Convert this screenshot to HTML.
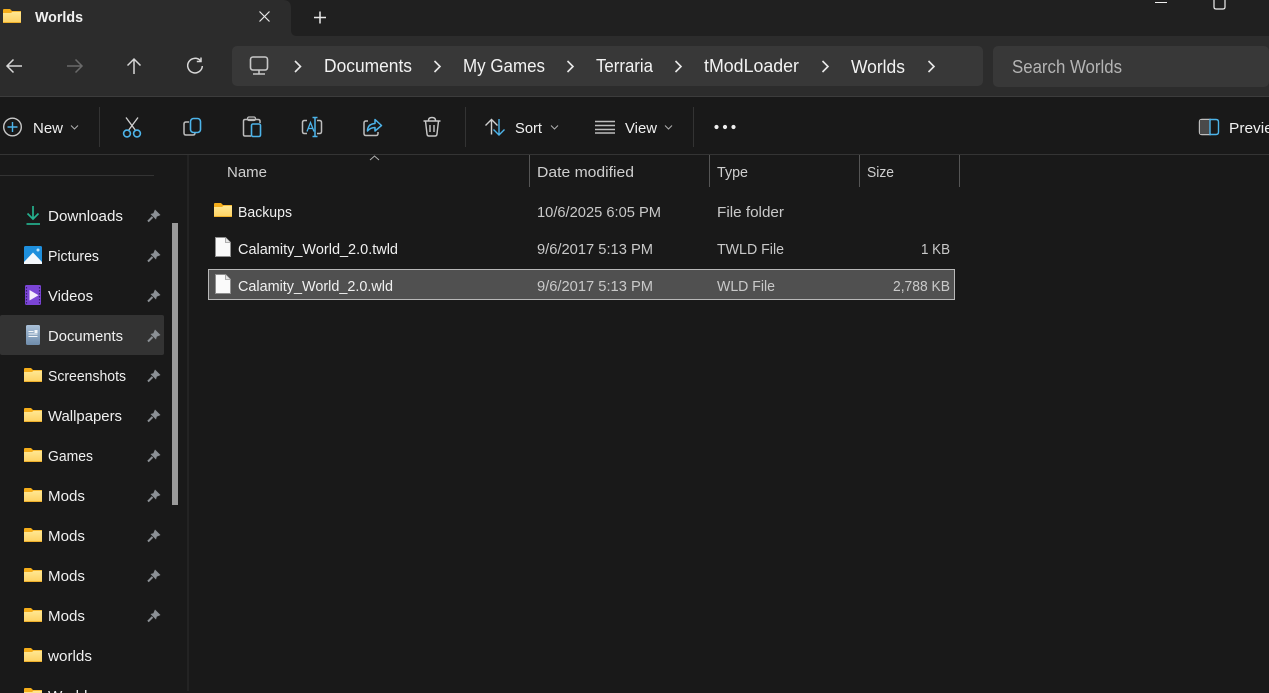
<!DOCTYPE html>
<html><head><meta charset="utf-8"><style>
html,body{margin:0;padding:0;background:#191919;overflow:hidden;width:1269px;height:693px}
svg{display:block;position:absolute;left:0;top:0}
text{font-family:"Liberation Sans",sans-serif;fill:#f0f0f0}
.b{font-size:18px;fill:#f2f2f2}
.t{font-size:14.5px;fill:#f0f0f0}
.h{font-size:14.5px;fill:#cfcfcf}
.r{font-size:14.5px;fill:#c9c9c9}
</style></head><body>
<svg width="1269" height="693" viewBox="0 0 1269 693" fill="none">
<defs>
<linearGradient id="fg" x1="0" y1="0" x2="0" y2="1"><stop offset="0" stop-color="#ffe793"/><stop offset="1" stop-color="#fdd262"/></linearGradient>
<linearGradient id="dg" x1="0" y1="0" x2="0" y2="1"><stop offset="0" stop-color="#a9c0d8"/><stop offset="1" stop-color="#6f8cab"/></linearGradient>
<g id="folder"><path d="M0 1Q0 0 1 0H7L9 2H18V5H0Z" fill="#f4ad1a"/><path d="M0 14V4H8L9.500 2.800H17.500Q18 2.800 18 3.500V14Z" fill="url(#fg)"/><path d="M0 13.500H18" stroke="#efb02c" stroke-width="1"/></g>
<g id="pin"><path d="M8 .5L13.500 6 12 6.800 9.800 7.600 9 10.500 3.500 5 6.400 4.200 7.300 2Z" fill="#8b9095"/><path d="M5.500 8L1 12.500" stroke="#8b9095" stroke-width="2"/></g>
<g id="file"><path d="M.5.5H10.500L15.500 5.500V19.500H.5Z" fill="#fafafa" stroke="#8f8f8f"/><path d="M10.500.5V5.500H15.500" fill="#e6e6e6" stroke="#9a9a9a" stroke-width=".8"/></g>
</defs>

<rect width="1269" height="36" fill="#202020"/>
<path d="M0 0H283Q291 0 291 8V30Q291 36 297 36H1269V96H0Z" fill="#2c2c2c"/>
<rect x="0" y="96" width="1269" height="1" fill="#3c3c3c"/>
<rect x="0" y="97" width="1269" height="57" fill="#191919"/>
<rect x="0" y="154" width="1269" height="1" fill="#343434"/>

<use href="#folder" transform="translate(3 9)"/>
<text x="35" y="22" font-size="14.5" font-weight="bold" textLength="48" lengthAdjust="spacingAndGlyphs">Worlds</text>
<path d="M259.500 11.500L269.500 21.500M269.500 11.500L259.500 21.500" stroke="#e8e8e8" stroke-width="1.200"/>
<path d="M320 11.500V23.500M314 17.500H326" stroke="#e8e8e8" stroke-width="1.500"/>
<path d="M1155 2.500H1167" stroke="#f0f0f0" stroke-width="1"/>
<path d="M1214 -2V7Q1214 9 1216 9H1223Q1225 9 1225 7V-2" stroke="#f0f0f0" stroke-width="1.200"/>

<path d="M22 66H7.500M13.500 59.500L7 66L13.500 72.500" stroke="#d8d8d8" stroke-width="1.500"/>
<path d="M67 66H81.500M75.500 59.500L82 66L75.500 72.500" stroke="#6a6a6a" stroke-width="1.500"/>
<path d="M134 74V59.500M127.500 65.500L134 59L140.500 65.500" stroke="#d8d8d8" stroke-width="1.500"/>
<path d="M200.500 60.800A7.300 7.300 0 1 0 202.300 66" stroke="#d8d8d8" stroke-width="1.500"/><path d="M201 57.500V61.500H196.800" stroke="#d8d8d8" stroke-width="1.500"/>

<rect x="232" y="46" width="751" height="40" rx="5" fill="#383838"/>
<rect x="993" y="46" width="276" height="41" rx="5" fill="#383838"/>
<rect x="250.500" y="57" width="17" height="13" rx="2.500" stroke="#c8c8c8" stroke-width="1.600"/>
<path d="M259 70V73.500M253 74H265" stroke="#c8c8c8" stroke-width="1.500"/>
<g stroke="#e8e8e8" stroke-width="1.600">
<path d="M295 61L300.500 66.500L295 72"/>
<path d="M434.500 61L440 66.500L434.500 72"/>
<path d="M567.500 61L573 66.500L567.500 72"/>
<path d="M675.500 61L681 66.500L675.500 72"/>
<path d="M822.500 61L828 66.500L822.500 72"/>
<path d="M928.500 61L934 66.500L928.500 72"/>
</g>
<text class="b" x="324" y="72" textLength="88" lengthAdjust="spacingAndGlyphs">Documents</text>
<text class="b" x="463" y="72" textLength="82" lengthAdjust="spacingAndGlyphs">My Games</text>
<text class="b" x="596" y="72" textLength="57" lengthAdjust="spacingAndGlyphs">Terraria</text>
<text class="b" x="704" y="72" textLength="95" lengthAdjust="spacingAndGlyphs">tModLoader</text>
<text class="b" x="851" y="73" textLength="54" lengthAdjust="spacingAndGlyphs">Worlds</text>
<text x="1012" y="73" font-size="18" style="fill:#b4b4b4" textLength="110" lengthAdjust="spacingAndGlyphs">Search Worlds</text>

<circle cx="12.500" cy="127" r="8.800" stroke="#c8c8c8" stroke-width="1.400"/>
<path d="M12.500 122V132M7.500 127H17.500" stroke="#4db4ea" stroke-width="1.400"/>
<text class="t" x="33" y="133" textLength="30" lengthAdjust="spacingAndGlyphs">New</text>
<path d="M71 125.500L74.500 129L78 125.500" stroke="#b0b0b0"/>
<rect x="99" y="107" width="1" height="40" fill="#333"/>

<path d="M126 117.500L136 131M138 117.500L128 131" stroke="#d0d0d0" stroke-width="1.300"/>
<circle cx="127" cy="133.500" r="3.400" stroke="#4db4ea" stroke-width="1.600"/><circle cx="137" cy="133.500" r="3.400" stroke="#4db4ea" stroke-width="1.600"/>
<path d="M189 122H186Q184 122 184 124V133Q184 135 186 135H193Q195 135 195 133" stroke="#bdbdbd" stroke-width="1.500"/>
<rect x="190.500" y="118.500" width="10" height="14" rx="3" stroke="#4db4ea" stroke-width="1.600"/>
<path d="M251 136H245Q243.500 136 243.500 134.500V121Q243.500 119.500 245 119.500H258Q260 119.500 260 121V123" stroke="#bdbdbd" stroke-width="1.500"/>
<rect x="247.500" y="117" width="8" height="3.500" rx="1.500" stroke="#bdbdbd" stroke-width="1.300"/>
<rect x="251.500" y="124" width="9" height="12.500" rx="1.500" stroke="#4db4ea" stroke-width="1.600"/>
<path d="M307 120.500H304.500Q302.500 120.500 302.500 122.500V131.500Q302.500 133.500 304.500 133.500H307M317 120.500H319.500Q321.500 120.500 321.500 122.500V131.500Q321.500 133.500 319.500 133.500H317" stroke="#bdbdbd" stroke-width="1.500"/>
<path d="M307 131.500L310.500 122.500L314 131.500M308.200 128.500H312.800" stroke="#4db4ea" stroke-width="1.300"/>
<path d="M315 117V137M312.500 117.500H317.500M312.500 136.500H317.500" stroke="#4db4ea" stroke-width="1.500"/>
<path d="M368 121H366Q364 121 364 123V133.500Q364 135.500 366 135.500H376Q378 135.500 378 133.500V132" stroke="#bdbdbd" stroke-width="1.500"/>
<path d="M367.500 131Q367.500 124 375 123.500V119.500L381.500 125.500L375 131V127.500Q370.500 127.500 367.500 131Z" stroke="#4db4ea" stroke-width="1.500" stroke-linejoin="round"/>
<path d="M423.500 121H440.500M428.500 120.500Q428.500 117.500 432 117.500Q435.500 117.500 435.500 120.500" stroke="#c8c8c8" stroke-width="1.400"/>
<path d="M425.500 121L427 134Q427.200 136 429 136H435Q436.800 136 437 134L438.500 121" stroke="#c8c8c8" stroke-width="1.400"/>
<path d="M430 125V132M434 125V132" stroke="#c8c8c8" stroke-width="1.400"/>
<rect x="465" y="107" width="1" height="40" fill="#333"/>

<path d="M491.500 135V120M485.500 126L491.500 120L497.500 126" stroke="#d0d0d0" stroke-width="1.400" transform="translate(0 -.5)"/>
<path d="M499 119V135M493.500 129.500L499 135L504.500 129.500" stroke="#4db4ea" stroke-width="1.400"/>
<text class="t" x="515" y="133" textLength="27" lengthAdjust="spacingAndGlyphs">Sort</text>
<path d="M551 125.500L554.500 129L558 125.500" stroke="#b0b0b0"/>
<path d="M595 121.500H615M595 125.500H615M595 129.500H615M595 133H615" stroke="#bdbdbd" stroke-width="1.400"/>
<text class="t" x="625" y="133" textLength="32" lengthAdjust="spacingAndGlyphs">View</text>
<path d="M665 125.500L668.500 129L672 125.500" stroke="#b0b0b0"/>
<rect x="693" y="107" width="1" height="40" fill="#333"/>
<circle cx="716.500" cy="127" r="2.100" fill="#eee"/><circle cx="725" cy="127" r="2.100" fill="#eee"/><circle cx="733.500" cy="127" r="2.100" fill="#eee"/>
<path d="M1211 119.500H1202Q1199.500 119.500 1199.500 122V132Q1199.500 134.500 1202 134.500H1211" stroke="#bdbdbd" stroke-width="1.400"/>
<rect x="1200" y="120" width="10" height="14" fill="#4a4a4a"/>
<path d="M1210 119.500H1216Q1218.500 119.500 1218.500 122V132Q1218.500 134.500 1216 134.500H1210V119.500Z" stroke="#4db4ea" stroke-width="1.400"/>
<text class="t" x="1229" y="133" textLength="55" lengthAdjust="spacingAndGlyphs">Preview</text>

<rect x="187" y="155" width="2" height="536" fill="#232323"/>
<rect x="0" y="175" width="154" height="1" fill="#333"/>
<rect x="172" y="223" width="6" height="282" fill="#9a9a9a"/>
<rect x="0" y="315" width="164" height="40" rx="2" fill="#333"/>

<path d="M33 206V219M27.500 213.500L33 219L38.500 213.500" stroke="#25b08e" stroke-width="1.700"/><path d="M26.500 224H40" stroke="#25b08e" stroke-width="1.700"/>
<rect x="24" y="246" width="18" height="18" rx="1.500" fill="#1e8fdd"/>
<circle cx="38" cy="250" r="1.500" fill="#bfe2f8"/>
<path d="M24 262L33 252.500L42 262V264H24Z" fill="#f4f8fc"/>
<rect x="25" y="285" width="16" height="20" rx="1.500" fill="#7b45d6"/>
<path d="M29.500 290V300.500L38.500 295.200Z" fill="#f2eafc"/>
<path d="M26.500 287V304M39.500 287V304" stroke="#36206e" stroke-width="1.200" stroke-dasharray="1.500 1.500"/>
<rect x="26" y="325" width="14" height="20" rx="1.500" fill="url(#dg)"/>
<path d="M28.500 331.500H33.500M28.500 334H37.500M28.500 336.500H37.500" stroke="#f2f5f8" stroke-width="1.100"/><rect x="34.500" y="330" width="3" height="3" fill="#f2f5f8"/>
<use href="#folder" transform="translate(24 368)"/>
<use href="#folder" transform="translate(24 408)"/>
<use href="#folder" transform="translate(24 448)"/>
<use href="#folder" transform="translate(24 488)"/>
<use href="#folder" transform="translate(24 528)"/>
<use href="#folder" transform="translate(24 568)"/>
<use href="#folder" transform="translate(24 608)"/>
<use href="#folder" transform="translate(24 648)"/>
<use href="#folder" transform="translate(24 688)"/>

<text class="t" x="48" y="221" textLength="75" lengthAdjust="spacingAndGlyphs">Downloads</text>
<text class="t" x="48" y="261" textLength="51" lengthAdjust="spacingAndGlyphs">Pictures</text>
<text class="t" x="48" y="301" textLength="45" lengthAdjust="spacingAndGlyphs">Videos</text>
<text class="t" x="48" y="341" textLength="75" lengthAdjust="spacingAndGlyphs">Documents</text>
<text class="t" x="48" y="381" textLength="78" lengthAdjust="spacingAndGlyphs">Screenshots</text>
<text class="t" x="48" y="421" textLength="74" lengthAdjust="spacingAndGlyphs">Wallpapers</text>
<text class="t" x="48" y="461" textLength="45" lengthAdjust="spacingAndGlyphs">Games</text>
<text class="t" x="48" y="501" textLength="37" lengthAdjust="spacingAndGlyphs">Mods</text>
<text class="t" x="48" y="541" textLength="37" lengthAdjust="spacingAndGlyphs">Mods</text>
<text class="t" x="48" y="581" textLength="37" lengthAdjust="spacingAndGlyphs">Mods</text>
<text class="t" x="48" y="621" textLength="37" lengthAdjust="spacingAndGlyphs">Mods</text>
<text class="t" x="48" y="661" textLength="44" lengthAdjust="spacingAndGlyphs">worlds</text>
<text class="t" x="48" y="701" textLength="47" lengthAdjust="spacingAndGlyphs">Worlds</text>

<use href="#pin" transform="translate(147 209)"/>
<use href="#pin" transform="translate(147 249)"/>
<use href="#pin" transform="translate(147 289)"/>
<use href="#pin" transform="translate(147 329)"/>
<use href="#pin" transform="translate(147 369)"/>
<use href="#pin" transform="translate(147 409)"/>
<use href="#pin" transform="translate(147 449)"/>
<use href="#pin" transform="translate(147 489)"/>
<use href="#pin" transform="translate(147 529)"/>
<use href="#pin" transform="translate(147 569)"/>
<use href="#pin" transform="translate(147 609)"/>

<path d="M370 160L374.500 156L379 160" stroke="#b0b0b0"/>
<rect x="529" y="155" width="1" height="32" fill="#555"/>
<rect x="709" y="155" width="1" height="32" fill="#555"/>
<rect x="859" y="155" width="1" height="32" fill="#555"/>
<rect x="959" y="155" width="1" height="32" fill="#555"/>
<text class="h" x="227" y="177" textLength="40" lengthAdjust="spacingAndGlyphs">Name</text>
<text class="h" x="537" y="177" textLength="97" lengthAdjust="spacingAndGlyphs">Date modified</text>
<text class="h" x="717" y="177" textLength="31" lengthAdjust="spacingAndGlyphs">Type</text>
<text class="h" x="867" y="177" textLength="27" lengthAdjust="spacingAndGlyphs">Size</text>

<rect x="208.500" y="269.500" width="746" height="30" fill="#505050" stroke="#b8b8b8"/>
<use href="#folder" transform="translate(214 203)"/>
<use href="#file" transform="translate(215 237)"/>
<use href="#file" transform="translate(215 274)"/>
<text class="t" x="238" y="217" textLength="54" lengthAdjust="spacingAndGlyphs">Backups</text>
<text class="t" x="238" y="254" textLength="160" lengthAdjust="spacingAndGlyphs">Calamity_World_2.0.twld</text>
<text class="t" x="238" y="291" textLength="155" lengthAdjust="spacingAndGlyphs">Calamity_World_2.0.wld</text>
<text class="r" x="537" y="217" textLength="124" lengthAdjust="spacingAndGlyphs">10/6/2025 6:05 PM</text>
<text class="r" x="537" y="254" textLength="116" lengthAdjust="spacingAndGlyphs">9/6/2017 5:13 PM</text>
<text class="r" x="537" y="291" textLength="116" lengthAdjust="spacingAndGlyphs">9/6/2017 5:13 PM</text>
<text class="r" x="717" y="217" textLength="67" lengthAdjust="spacingAndGlyphs">File folder</text>
<text class="r" x="717" y="254" textLength="67" lengthAdjust="spacingAndGlyphs">TWLD File</text>
<text class="r" x="717" y="291" textLength="58" lengthAdjust="spacingAndGlyphs">WLD File</text>
<text class="r" x="921" y="254" textLength="29" lengthAdjust="spacingAndGlyphs">1 KB</text>
<text class="r" x="893" y="291" textLength="57" lengthAdjust="spacingAndGlyphs">2,788 KB</text>
</svg>
</body></html>
